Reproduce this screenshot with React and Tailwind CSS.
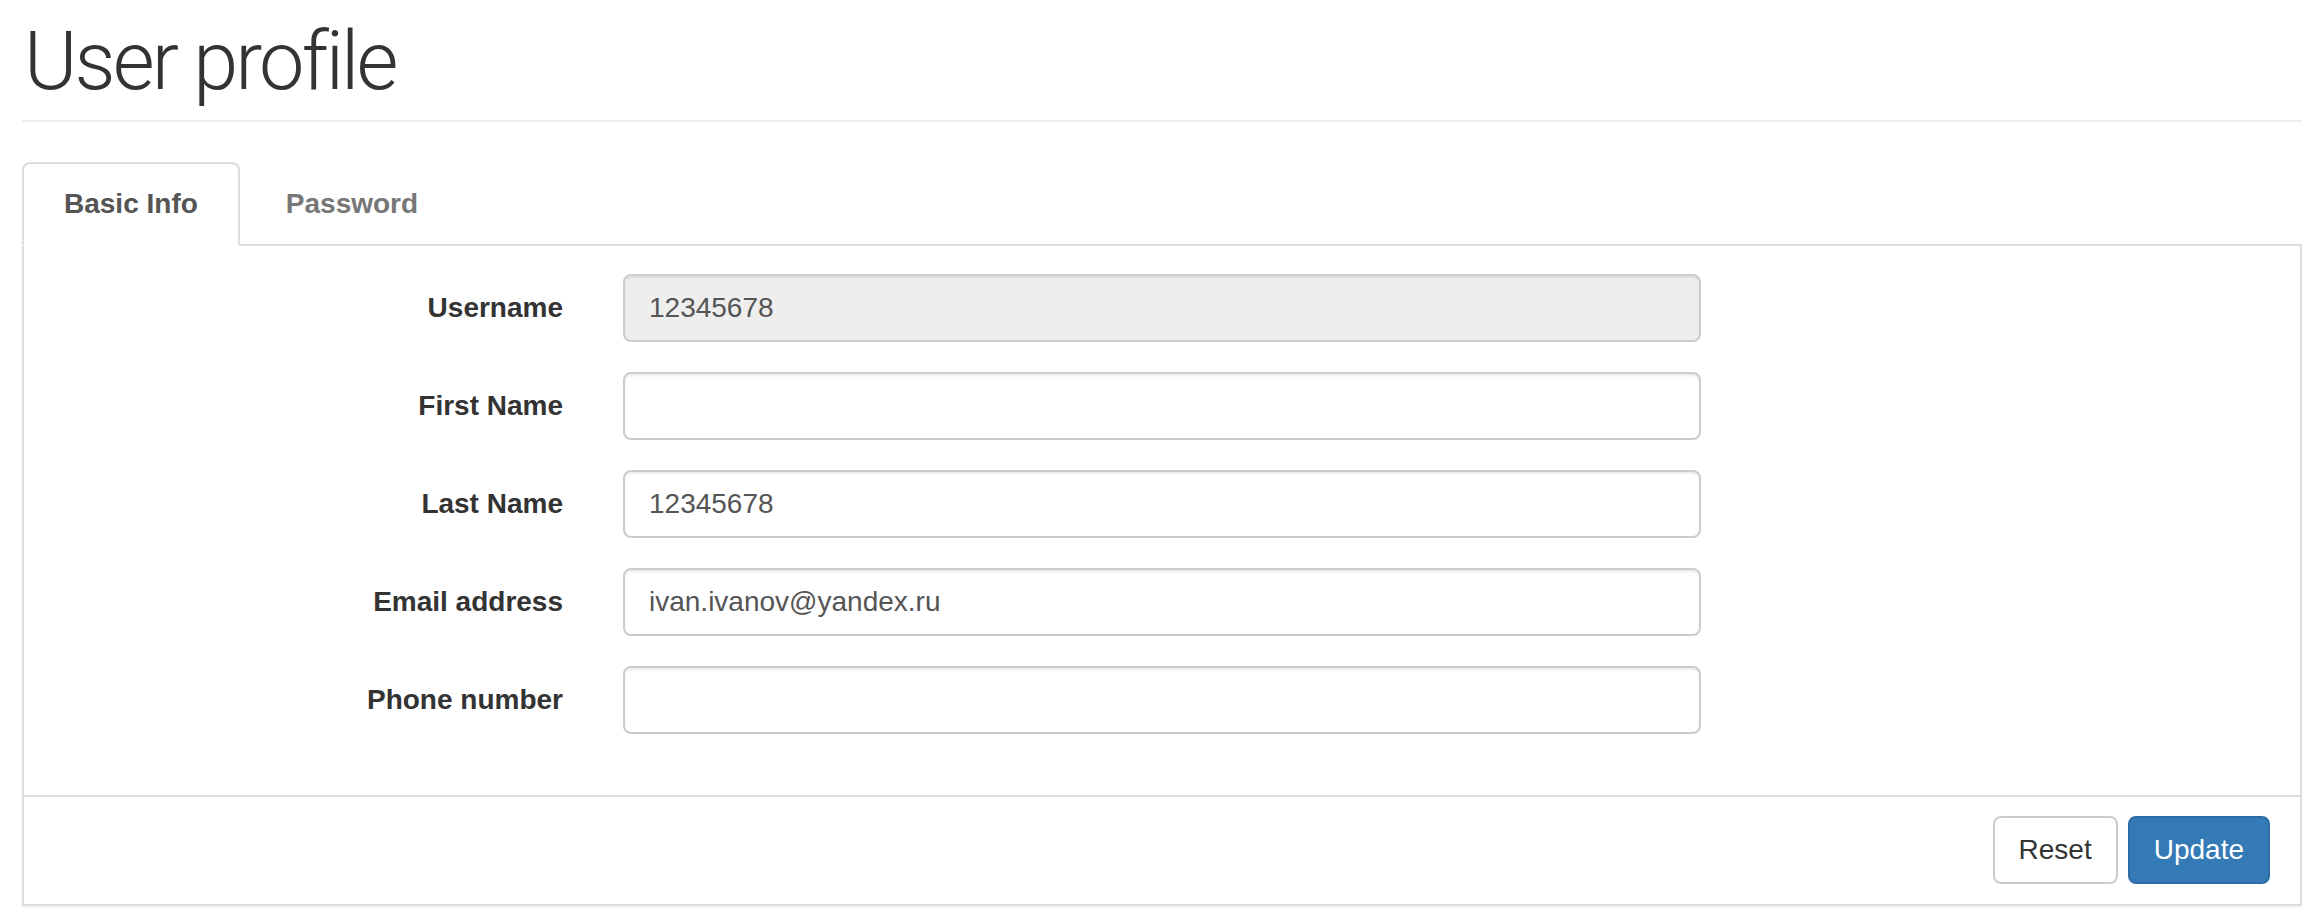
import React from 'react';

const FIELDS = [
  { label: 'Username', value: '12345678', disabled: true },
  { label: 'First Name', value: '' },
  { label: 'Last Name', value: '12345678' },
  { label: 'Email address', value: 'ivan.ivanov@yandex.ru' },
  { label: 'Phone number', value: '' },
];

const FormRow = ({ label, value, disabled }) => (
  <div className="flex items-center mb-[30px]">
    <label className="w-3/12 pr-[30px] text-right font-bold text-[28px] leading-[40px] text-[#333]">
      {label}
    </label>
    <div className="w-6/12 px-[30px]">
      <input
        type="text"
        defaultValue={value}
        disabled={disabled}
        className={`block w-full h-[68px] px-[24px] text-[28px] text-[#555] border-2 border-[#ccc] rounded-[8px] outline-none shadow-[inset_0_2px_2px_rgba(0,0,0,0.075)] ${
          disabled ? 'bg-[#eee]' : 'bg-white'
        }`}
      />
    </div>
  </div>
);

export default function App() {
  const [tab, setTab] = React.useState('basic');

  return (
    <div className="min-h-screen bg-white pl-[22px] pr-[20px] font-['Liberation_Sans',Arial,sans-serif]">
      <h1 className="mt-[17px] pb-[14px] border-b-2 border-[#eee] font-['Roboto',sans-serif] font-light text-[81px] leading-[89px] tracking-[-2.8px] text-[#333] pl-[2px]">
        User profile
      </h1>

      <ul className="mt-[40px] flex border-b-2 border-[#ddd]">
        <li className="-mb-[2px] mr-[4px]">
          <button
            onClick={() => setTab('basic')}
            className={`px-[40px] py-[20px] text-[28px] leading-[40px] font-bold border-2 rounded-t-[8px] ${
              tab === 'basic'
                ? 'bg-white border-[#ddd] border-b-white text-[#555]'
                : 'border-transparent text-[#777]'
            }`}
          >
            Basic Info
          </button>
        </li>
        <li className="-mb-[2px]">
          <button
            onClick={() => setTab('password')}
            className={`px-[40px] py-[20px] text-[28px] leading-[40px] font-bold border-2 rounded-t-[8px] ${
              tab === 'password'
                ? 'bg-white border-[#ddd] border-b-white text-[#555]'
                : 'border-transparent text-[#777]'
            }`}
          >
            Password
          </button>
        </li>
      </ul>

      <div className="border-2 border-t-0 border-[#ddd] bg-white shadow-[0_2px_2px_rgba(0,0,0,0.05)]">
        <div className="pt-[28px] pb-[31px]">
          {FIELDS.map((f) => (
            <FormRow key={f.label} {...f} />
          ))}
        </div>
        <div className="flex justify-end gap-[10px] border-t-2 border-[#ddd] pt-[19px] pb-[20px] px-[30px]">
          <button className="h-[68px] px-[24px] text-[28px] text-[#333] bg-white border-2 border-[#ccc] rounded-[8px]">
            Reset
          </button>
          <button className="h-[68px] px-[24px] text-[28px] text-white bg-[#337ab7] border-2 border-[#2e6da4] rounded-[8px]">
            Update
          </button>
        </div>
      </div>
    </div>
  );
}
